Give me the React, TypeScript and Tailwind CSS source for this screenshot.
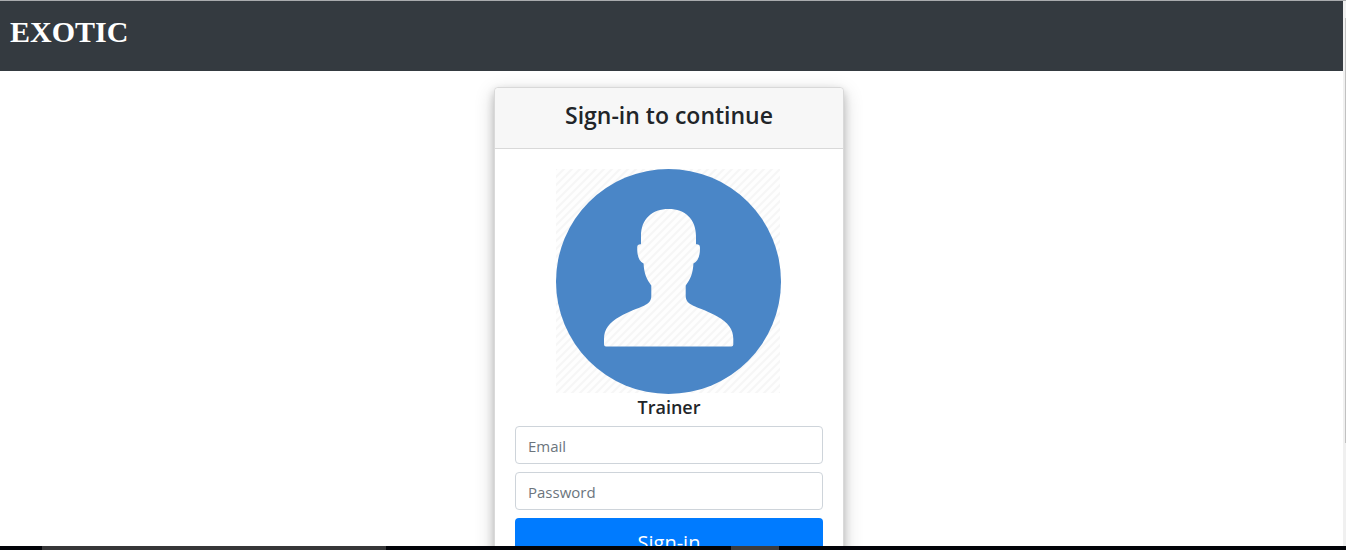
function Avatar() {
  return (
    <svg
      viewBox="0 0 225 225"
      preserveAspectRatio="xMinYMin meet"
      className="mx-auto block h-[225px] w-[226px]"
      role="img"
      aria-label="User"
    >
      <defs>
        <pattern id="hatch" width="8" height="8" patternUnits="userSpaceOnUse">
          <rect width="8" height="8" fill="#fefefe" />
          <path d="M-2 2 2-2M0 8 8 0M6 10 10 6" stroke="#f6f6f6" strokeWidth="2" />
        </pattern>
      </defs>
      <rect width="224" height="224" fill="url(#hatch)" />
      <circle cx="112.5" cy="112.5" r="112.5" fill="#4a86c7" />
      <path
        fill="url(#hatch)"
        d="M112.7 40C96 40 85 50 85 67V75.2C82.2 75.2 81.2 76 81.2 79C81.2 87 83 92.5 87.6 94.5C88 104 90.5 110 95.3 116.5V127C95.3 132 92.5 134.5 88 136.7C82 139.5 72 142.5 64 147.5C53 153.5 48 160.5 48 170V175.5Q48 177.5 50 177.5H175.3Q177.3 177.5 177.3 175.5V170C177.3 160.5 172.3 153.5 161.3 147.5C153.3 142.5 143.3 139.5 137.3 136.7C132.8 134.5 129.7 132 129.7 127V116.5C134.5 110 137 104 137.4 94.5C142 92.5 144 87 144 79C144 76 143 75.2 140 75.2V67C140 50 129 40 112.7 40Z"
      />
    </svg>
  );
}

const inputClass =
  "block h-[38px] w-full rounded border border-[#ced4da] bg-white px-3 pt-0.5 text-[15px] text-[#495057] outline-none placeholder:text-[#6c757d] focus:border-[#80bdff]";

export default function App() {
  return (
    <div className="flex h-screen flex-col overflow-hidden bg-white font-['Segoe_UI','Open_Sans',sans-serif] text-[#212529]">
      <div className="h-px shrink-0 bg-[#a9abae]" />
      <div className="flex min-h-0 flex-1">
        <div className="min-w-0 flex-1 overflow-hidden">
          <header className="h-[70px] bg-[#343a40] px-2.5 pt-3">
            <a
              href="#"
              className="font-['Liberation_Serif',serif] text-[30px] leading-[38px] font-bold text-white"
            >
              EXOTIC
            </a>
          </header>
          <main className="flex justify-center pt-4 pr-[5px]">
            <section className="w-[350px] shrink-0 rounded border border-[#d9d9d9] bg-white shadow-[0_4px_8px_0_rgba(0,0,0,0.2),0_6px_20px_0_rgba(0,0,0,0.19)]">
              <div className="h-[61px] rounded-t border-b border-[#d9d9d9] bg-[#f7f7f7] pt-3 text-center">
                <h1 className="text-[23px] leading-[30px] font-semibold">Sign-in to continue</h1>
              </div>
              <div className="p-5">
                <Avatar />
                <form onSubmit={(event) => event.preventDefault()}>
                  <h2 className="mb-1.5 text-center text-[18px] leading-[26px] font-semibold">Trainer</h2>
                  <input type="email" aria-label="Email" placeholder="Email" className={inputClass} />
                  <input
                    type="password"
                    aria-label="Password"
                    placeholder="Password"
                    className={`mt-2 ${inputClass}`}
                  />
                  <button
                    type="submit"
                    className="mt-2 block h-[50px] w-full rounded bg-[#007bff] text-[20px] leading-7 text-white"
                  >
                    Sign-in
                  </button>
                </form>
              </div>
            </section>
          </main>
        </div>
        <div className="flex w-[3px] shrink-0 flex-col items-end bg-[#f0f0f0] pt-[17px]" aria-hidden="true">
          <div className="h-[425px] w-px bg-[#c1c1c1]" />
        </div>
      </div>
      <div className="flex h-1 shrink-0 bg-[#020308]" aria-hidden="true">
        <div className="ml-[42px] w-[344px] bg-[#363638]" />
        <div className="ml-[345px] w-12 bg-[#3c3c3e]" />
      </div>
    </div>
  );
}
